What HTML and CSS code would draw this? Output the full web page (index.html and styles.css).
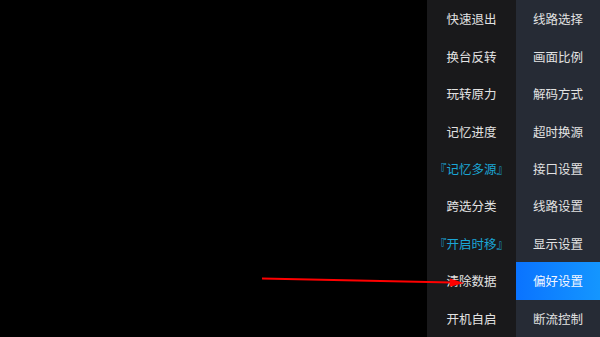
FILE: index.html
```html
<!DOCTYPE html>
<html lang="zh-CN">
<head>
    <meta charset="UTF-8">
    <meta name="viewport" content="width=device-width, initial-scale=1.0">
    <title>设置菜单</title>
    <link rel="stylesheet" href="styles.css">
</head>
<body>

    <div class="screen">
        <div class="player"></div>

        <div class="menu">
            <ul class="menu-col menu-left">
                <li>快速退出</li>
                <li>换台反转</li>
                <li>玩转原力</li>
                <li>记忆进度</li>
                <li class="on">『记忆多源』</li>
                <li>跨选分类</li>
                <li class="on">『开启时移』</li>
                <li>清除数据</li>
                <li>开机自启</li>
            </ul>
            <ul class="menu-col menu-right">
                <li>线路选择</li>
                <li>画面比例</li>
                <li>解码方式</li>
                <li>超时换源</li>
                <li>接口设置</li>
                <li>线路设置</li>
                <li>显示设置</li>
                <li class="active">偏好设置</li>
                <li>断流控制</li>
            </ul>
        </div>

        <!-- 标注箭头 -->
        <svg class="pointer" width="600" height="337" viewBox="0 0 600 337">
            <line x1="262" y1="278.5" x2="452" y2="282.6" stroke="#ff0000" stroke-width="2"/>
            <polygon points="464,283 450,278.6 450,286.8" fill="#ff0000"/>
        </svg>
    </div>

</body>
</html>
```

FILE: styles.css
```css
html, body {
    margin: 0;
    padding: 0;
    background-color: #000;
}

body {
    font-family: "Noto Sans CJK SC", "Noto Sans", sans-serif;
    width: 600px;
    height: 337px;
    overflow: hidden;
}

.screen {
    position: relative;
    display: flex;
    width: 600px;
    height: 337px;
}

.player {
    flex: 1;
    background-color: #000;
}

.menu {
    display: flex;
    height: 337px;
}

.menu-col {
    list-style: none;
    margin: 0;
    padding: 0;
    display: grid;
    grid-template-rows: repeat(9, 1fr);
}

.menu-col li {
    display: flex;
    align-items: center;
    justify-content: center;
    font-size: 12.5px;
    color: #e2e2e2;
    white-space: nowrap;
}

.menu-left {
    width: 89px;
    background-color: #19191b;
}

.menu-left li.on {
    color: #1ba6d6;
}

.menu-right {
    width: 84px;
    background-color: #262b35;
}

.menu-right li.active {
    background: linear-gradient(90deg, #0a73ff 0%, #1496ff 100%);
    color: #f2f6ff;
}

.pointer {
    position: absolute;
    left: 0;
    top: 0;
    pointer-events: none;
}
```
